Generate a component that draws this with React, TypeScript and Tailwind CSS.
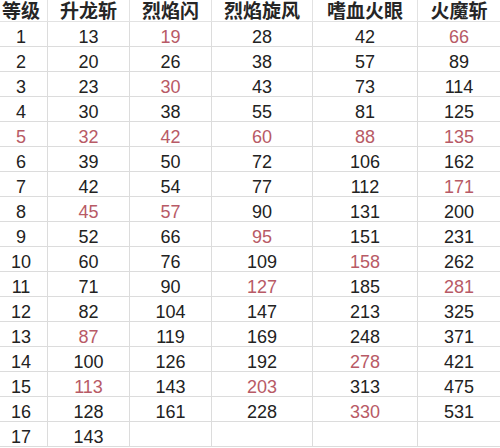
const headers = ["等级", "升龙斩", "烈焰闪", "烈焰旋风", "嗜血火眼", "火魔斩"];

// value list per level; "*" suffix marks the red cells
const rows: string[][] = [
  ["1", "13", "19*", "28", "42", "66*"],
  ["2", "20", "26", "38", "57", "89"],
  ["3", "23", "30*", "43", "73", "114"],
  ["4", "30", "38", "55", "81", "125"],
  ["5*", "32*", "42*", "60*", "88*", "135*"],
  ["6", "39", "50", "72", "106", "162"],
  ["7", "42", "54", "77", "112", "171*"],
  ["8", "45*", "57*", "90", "131", "200"],
  ["9", "52", "66", "95*", "151", "231"],
  ["10", "60", "76", "109", "158*", "262"],
  ["11", "71", "90", "127*", "185", "281*"],
  ["12", "82", "104", "147", "213", "325"],
  ["13", "87*", "119", "169", "248", "371"],
  ["14", "100", "126", "192", "278*", "421"],
  ["15", "113*", "143", "203*", "313", "475"],
  ["16", "128", "161", "228", "330*", "531"],
  ["17", "143", "", "", "", ""],
];

const font = { fontFamily: '"Liberation Sans", "Noto Sans CJK SC", sans-serif' };

export default function App() {
  return (
    <div className="w-[500px] h-[448px] bg-white overflow-hidden" style={font}>
      <div className="grid grid-cols-[48px_82px_82px_101px_105px_82px] grid-rows-[22px_repeat(17,25px)]">
        {headers.map((h, i) => (
          <div
            key={h}
            className={`flex items-start justify-center overflow-visible border-b border-[#e2e2e2] text-[19px] font-bold text-[#262626] leading-[20px] whitespace-nowrap ${
              i < 5 ? "border-r" : ""
            } ${i === 0 ? "pr-[5px]" : ""}`}
            style={{ fontFamily: '"Noto Sans CJK SC", sans-serif' }}
          >
            {h}
          </div>
        ))}
        {rows.map((r, ri) =>
          r.map((v, ci) => {
            const red = v.endsWith("*");
            const text = red ? v.slice(0, -1) : v;
            return (
              <div
                key={`${ri}-${ci}`}
                className={`flex items-center justify-center border-b border-[#dcdcdc] text-[18px] leading-[20px] pt-[5px] ${
                  ci < 5 ? "border-r" : ""
                } ${ci === 0 ? "pr-[5px]" : ""} ${red ? "text-[#b85a66]" : "text-[#222222]"}`}
              >
                {text}
              </div>
            );
          })
        )}
      </div>
    </div>
  );
}
